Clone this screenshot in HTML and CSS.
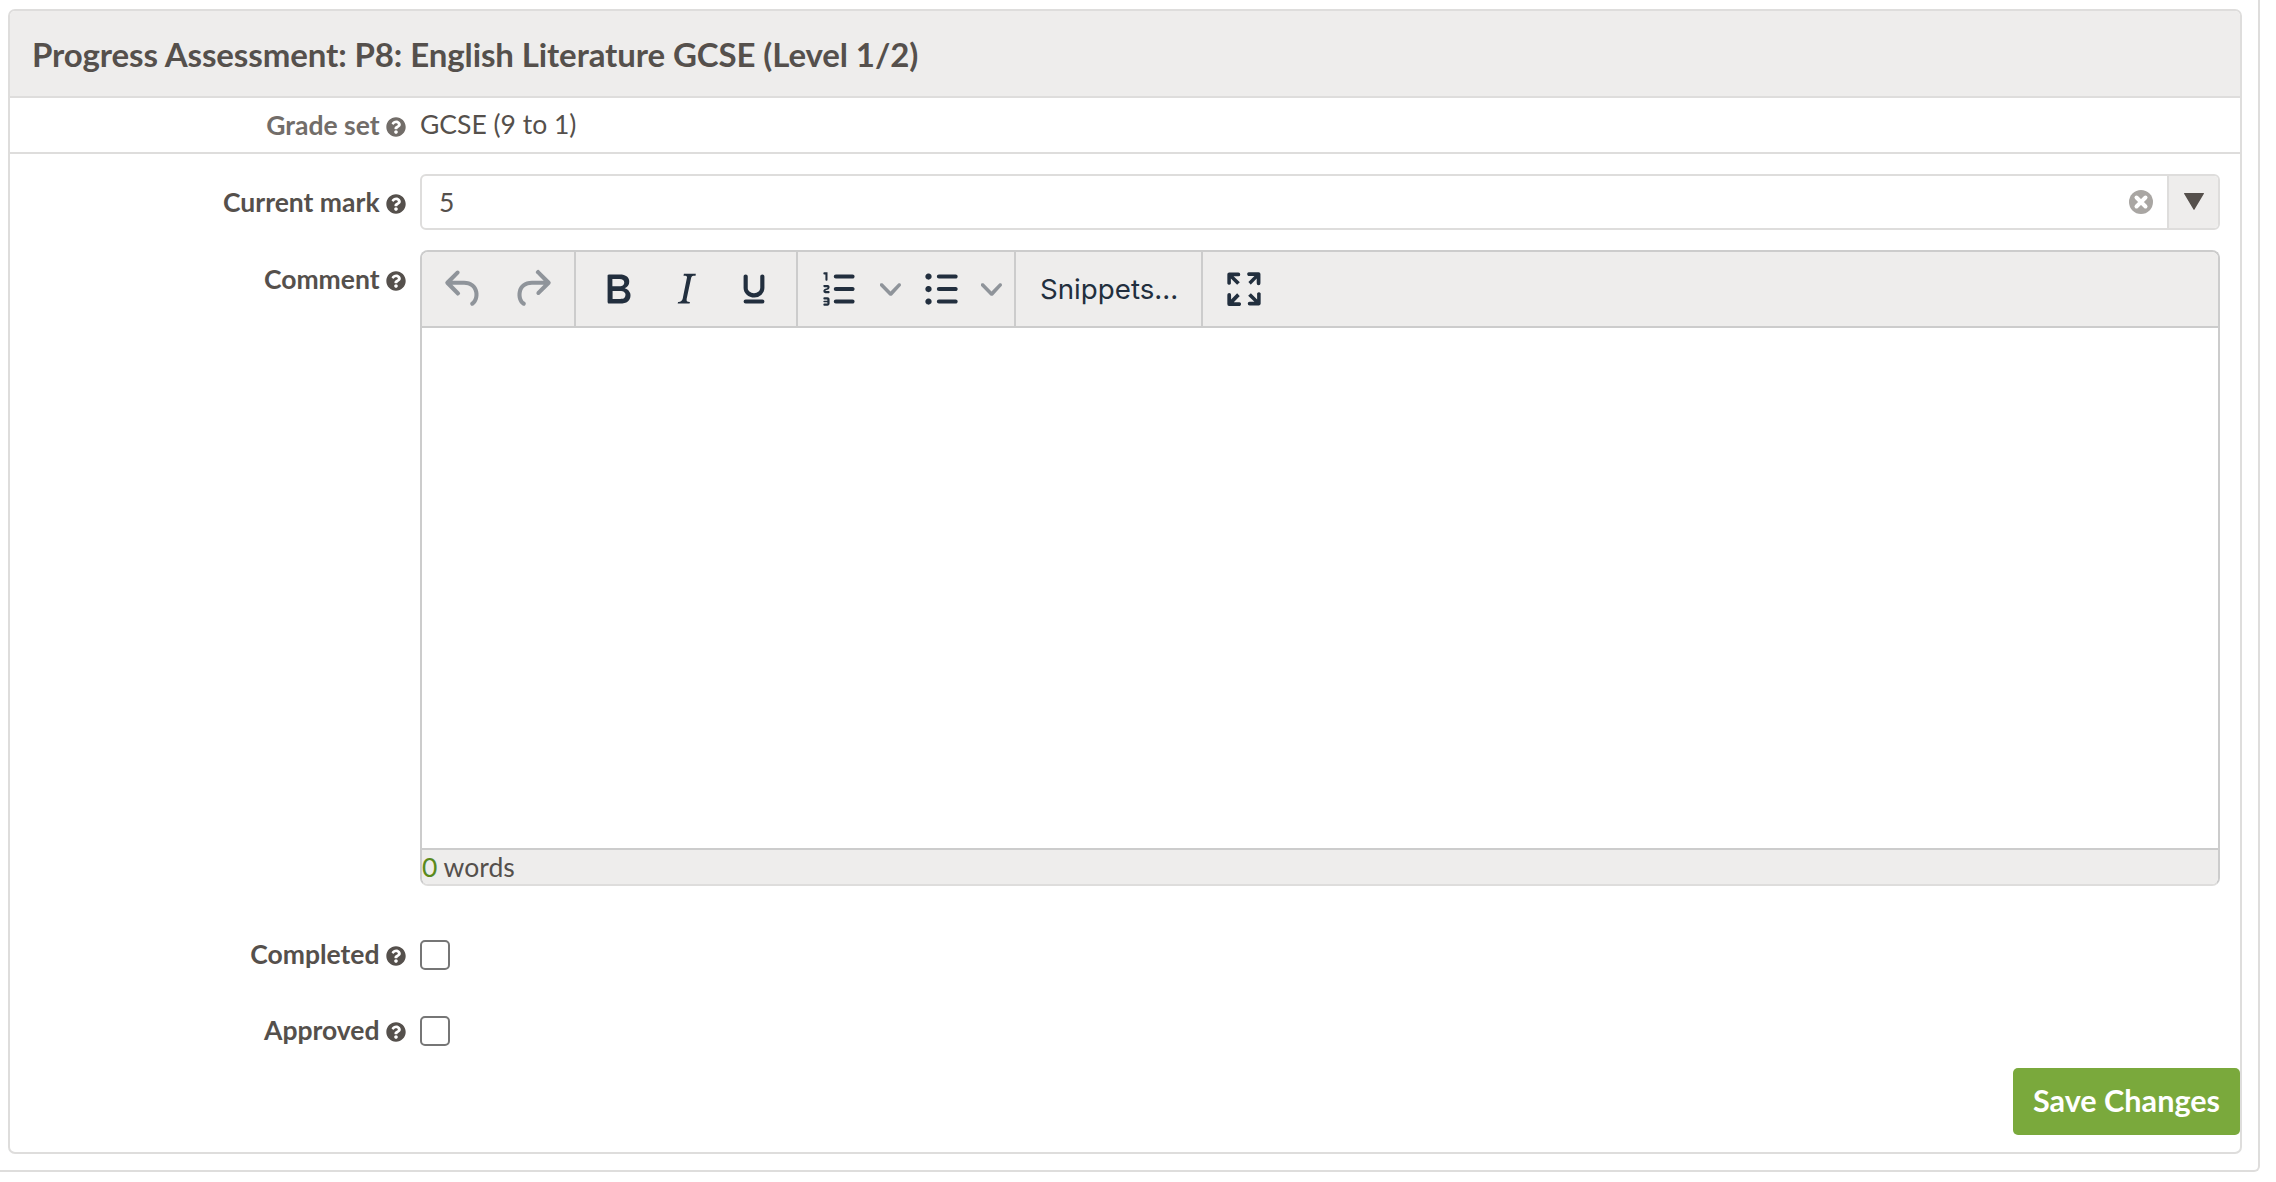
FILE: index.html
```html
<!DOCTYPE html>
<html lang="en">
<head>
<meta charset="utf-8">
<title>Progress Assessment</title>
<link rel="stylesheet" href="styles.css">
</head>
<body>
<div class="outer">
  <section class="panel">
    <h1 class="panel-title">Progress Assessment: P8: English Literature GCSE (Level 1/2)</h1>
    <div class="row row-static">
      <div class="label label-muted">Grade set <svg class="help" viewBox="0 0 512 512"><path d="M504 256c0 136.997-111.043 248-248 248S8 392.997 8 256C8 119.083 119.043 8 256 8s248 111.083 248 248zM262.655 90c-54.497 0-89.255 22.957-116.549 63.758-3.536 5.286-2.353 12.415 2.715 16.258l34.699 26.31c5.205 3.947 12.621 3.008 16.665-2.122 17.864-22.658 30.113-35.797 57.303-35.797 20.429 0 45.698 13.148 45.698 32.958 0 14.976-12.363 22.667-32.534 33.976C247.128 238.528 216 254.941 216 296v4c0 6.627 5.373 12 12 12h56c6.627 0 12-5.373 12-12v-1.333c0-28.462 83.186-29.647 83.186-106.667 0-58.002-60.165-102-116.531-102zM256 338c-25.365 0-46 20.635-46 46 0 25.364 20.635 46 46 46s46-20.636 46-46c0-25.365-20.635-46-46-46z"/></svg></div>
      <div class="static-value">GCSE (9 to 1)</div>
    </div>
    <div class="form-body">
      <div class="row row-select">
        <div class="label">Current mark <svg class="help" viewBox="0 0 512 512"><path d="M504 256c0 136.997-111.043 248-248 248S8 392.997 8 256C8 119.083 119.043 8 256 8s248 111.083 248 248zM262.655 90c-54.497 0-89.255 22.957-116.549 63.758-3.536 5.286-2.353 12.415 2.715 16.258l34.699 26.31c5.205 3.947 12.621 3.008 16.665-2.122 17.864-22.658 30.113-35.797 57.303-35.797 20.429 0 45.698 13.148 45.698 32.958 0 14.976-12.363 22.667-32.534 33.976C247.128 238.528 216 254.941 216 296v4c0 6.627 5.373 12 12 12h56c6.627 0 12-5.373 12-12v-1.333c0-28.462 83.186-29.647 83.186-106.667 0-58.002-60.165-102-116.531-102zM256 338c-25.365 0-46 20.635-46 46 0 25.364 20.635 46 46 46s46-20.636 46-46c0-25.365-20.635-46-46-46z"/></svg></div>
        <div class="select">
          <span class="select-value">5</span>
          <svg class="clear" viewBox="0 0 24 24"><circle cx="12" cy="12" r="12" fill="#a9a6a3"/><path d="M7.5 7.5l9 9M16.5 7.5l-9 9" stroke="#fff" stroke-width="4" stroke-linecap="round"/></svg>
          <span class="select-arrow"><svg class="arrow" viewBox="0 0 20 17"><path d="M0.5 0h19a.5.5 0 0 1 .4.8l-9.4 15.7a.6.6 0 0 1-1 0L.1.8A.5.5 0 0 1 .5 0z"/></svg></span>
        </div>
      </div>
      <div class="row row-editor">
        <div class="label label-editor">Comment <svg class="help" viewBox="0 0 512 512"><path d="M504 256c0 136.997-111.043 248-248 248S8 392.997 8 256C8 119.083 119.043 8 256 8s248 111.083 248 248zM262.655 90c-54.497 0-89.255 22.957-116.549 63.758-3.536 5.286-2.353 12.415 2.715 16.258l34.699 26.31c5.205 3.947 12.621 3.008 16.665-2.122 17.864-22.658 30.113-35.797 57.303-35.797 20.429 0 45.698 13.148 45.698 32.958 0 14.976-12.363 22.667-32.534 33.976C247.128 238.528 216 254.941 216 296v4c0 6.627 5.373 12 12 12h56c6.627 0 12-5.373 12-12v-1.333c0-28.462 83.186-29.647 83.186-106.667 0-58.002-60.165-102-116.531-102zM256 338c-25.365 0-46 20.635-46 46 0 25.364 20.635 46 46 46s46-20.636 46-46c0-25.365-20.635-46-46-46z"/></svg></div>
        <div class="editor">
          <div class="toolbar">
            <div class="tgroup tgroup-history">
              <span class="tbtn tbtn-disabled"><svg class="ticon" viewBox="0 0 24 24"><path d="M6.4 8H12c3.7 0 6.2 2 6.8 5.1.6 2.7-.4 5.6-2.3 6.8a1 1 0 0 1-1-1.8c1.1-.6 1.8-2.7 1.4-4.6-.5-2.1-2.1-3.5-4.9-3.5H6.4l3.3 3.3a1 1 0 1 1-1.4 1.4l-5-5a1 1 0 0 1 0-1.4l5-5a1 1 0 0 1 1.4 1.4L6.4 8Z"/></svg></span>
              <span class="tbtn tbtn-disabled"><svg class="ticon" viewBox="0 0 24 24"><path d="M17.6 10H12c-2.8 0-4.4 1.4-4.9 3.5-.4 2 .3 4 1.4 4.6a1 1 0 1 1-1 1.8c-2-1.2-2.9-4.1-2.3-6.8.6-3 3-5.1 6.8-5.1h5.6l-3.3-3.3a1 1 0 1 1 1.4-1.4l5 5a1 1 0 0 1 0 1.4l-5 5a1 1 0 0 1-1.4-1.4l3.3-3.3Z"/></svg></span>
            </div>
            <div class="tgroup tgroup-format">
              <span class="tbtn"><svg class="ticon" viewBox="0 0 24 24"><path d="M7.8 19c-.3 0-.5 0-.6-.2l-.2-.5V5.7c0-.2 0-.4.2-.5l.6-.2h5c1.5 0 2.7.3 3.5 1 .7.6 1.1 1.4 1.1 2.5a3 3 0 0 1-.6 1.9c-.4.6-1 1-1.6 1.2.4.1.9.3 1.3.6s.8.7 1 1.2c.4.4.5 1 .5 1.6 0 1.3-.4 2.3-1.3 3-.8.7-2.1 1-3.8 1H7.8Zm5-8.3c.6 0 1.2-.1 1.6-.5.4-.3.6-.7.6-1.3 0-1.1-.8-1.7-2.3-1.7H9.3v3.5h3.4Zm.5 6c.7 0 1.3-.1 1.7-.4.4-.4.6-.9.6-1.5s-.2-1-.7-1.4c-.4-.3-1-.4-2-.4H9.4v3.8h4Z"/></svg></span>
              <span class="tbtn"><svg class="ticon" viewBox="0 0 24 24"><path d="m16.7 4.7-.1.9h-.3c-.6 0-1 0-1.4.3-.3.3-.4.6-.5 1.1l-2.1 9.8v.6c0 .5.4.8 1.4.8h.2l-.2.8H8l.2-.8h.2c1.1 0 1.8-.5 2-1.5l2-9.8.1-.5c0-.6-.4-.8-1.4-.8h-.3l.2-.9h5.8Z"/></svg></span>
              <span class="tbtn"><svg class="ticon" viewBox="0 0 24 24"><path d="M16 5c.6 0 1 .4 1 1v5.5a4 4 0 0 1-.4 1.8l-1 1.4a5.3 5.3 0 0 1-5.5 1 5 5 0 0 1-1.6-1c-.5-.4-.8-.9-1.1-1.4a4 4 0 0 1-.4-1.8V6c0-.6.4-1 1-1s1 .4 1 1v5.5c0 .3 0 .6.2 1l.6.7a3.3 3.3 0 0 0 2.2.8 3.4 3.4 0 0 0 2.2-.8c.3-.2.4-.5.6-.8l.2-.9V6c0-.6.4-1 1-1ZM8 17h8c.6 0 1 .4 1 1s-.4 1-1 1H8a1 1 0 0 1 0-2Z"/></svg></span>
            </div>
            <div class="tgroup tgroup-lists">
              <span class="tbtn"><svg class="ticon" viewBox="0 0 24 24"><path d="M10 17h8c.6 0 1 .4 1 1s-.4 1-1 1h-8a1 1 0 0 1 0-2Zm0-6h8c.6 0 1 .4 1 1s-.4 1-1 1h-8a1 1 0 0 1 0-2Zm0-6h8c.6 0 1 .4 1 1s-.4 1-1 1h-8a1 1 0 1 1 0-2ZM6 4v3.5c0 .3-.2.5-.5.5a.5.5 0 0 1-.5-.5V5h-.5a.5.5 0 0 1 0-1H6Zm-1 8.8.2.2h1.3c.3 0 .5.2.5.5s-.2.5-.5.5H4.9a1 1 0 0 1-.9-1V13c0-.4.3-.8.6-1l1.2-.4.2-.3a.2.2 0 0 0-.2-.2H4.5a.5.5 0 0 1-.5-.5c0-.3.2-.5.5-.5h1.6c.5 0 .9.4.9 1v.1c0 .4-.3.8-.6 1l-1.2.4-.2.3ZM7 17v2c0 .6-.4 1-1 1H4.5a.5.5 0 0 1 0-1h1.2c.2 0 .3-.1.3-.3 0-.2-.1-.3-.3-.3H4.4a.4.4 0 1 1 0-.8h1.3c.2 0 .3-.1.3-.3 0-.2-.1-.3-.3-.3H4.5a.5.5 0 1 1 0-1H6c.6 0 1 .4 1 1Z"/></svg></span>
              <span class="tchev"><svg class="chev" viewBox="0 0 10 10"><path d="M8.7 2.2c.3-.3.8-.3 1 0 .4.4.4.9 0 1.2L5.7 7.8c-.3.3-.9.3-1.2 0L.2 3.4a.8.8 0 0 1 0-1.2c.3-.3.8-.3 1.1 0L5 6l3.7-3.8Z"/></svg></span>
              <span class="tbtn"><svg class="ticon" viewBox="0 0 24 24"><path d="M11 5h8c.6 0 1 .4 1 1s-.4 1-1 1h-8a1 1 0 0 1 0-2Zm0 6h8c.6 0 1 .4 1 1s-.4 1-1 1h-8a1 1 0 0 1 0-2Zm0 6h8c.6 0 1 .4 1 1s-.4 1-1 1h-8a1 1 0 0 1 0-2ZM4.5 6c0-.4.1-.8.4-1 .3-.4.7-.5 1.1-.5s.8.1 1 .4c.4.3.5.7.5 1.1s-.1.8-.4 1c-.3.4-.7.5-1.1.5s-.8-.1-1-.4c-.4-.3-.5-.7-.5-1.1Zm0 6c0-.4.1-.8.4-1 .3-.4.7-.5 1.1-.5s.8.1 1 .4c.4.3.5.7.5 1.1s-.1.8-.4 1c-.3.4-.7.5-1.1.5s-.8-.1-1-.4c-.4-.3-.5-.7-.5-1.1Zm0 6c0-.4.1-.8.4-1 .3-.4.7-.5 1.1-.5s.8.1 1 .4c.4.3.5.7.5 1.1s-.1.8-.4 1c-.3.4-.7.5-1.1.5s-.8-.1-1-.4c-.4-.3-.5-.7-.5-1.1Z"/></svg></span>
              <span class="tchev"><svg class="chev" viewBox="0 0 10 10"><path d="M8.7 2.2c.3-.3.8-.3 1 0 .4.4.4.9 0 1.2L5.7 7.8c-.3.3-.9.3-1.2 0L.2 3.4a.8.8 0 0 1 0-1.2c.3-.3.8-.3 1.1 0L5 6l3.7-3.8Z"/></svg></span>
            </div>
            <div class="tgroup tgroup-snippets"><span class="snippets">Snippets...</span></div>
            <div class="tgroup tgroup-full">
              <span class="tbtn"><svg class="ticon" viewBox="0 0 24 24"><path d="m15.3 10-1.2-1.3 2.9-3h-2.3a.9.9 0 1 1 0-1.7H19c.5 0 .9.4.9.9v4.4a.9.9 0 1 1-1.8 0V7l-2.9 3Zm0 4 3 3v-2.3a.9.9 0 1 1 1.7 0V19c0 .5-.4.9-.9.9h-4.4a.9.9 0 1 1 0-1.8H17l-3-2.9 1.3-1.2ZM10 15.4l-2.9 3h2.3a.9.9 0 1 1 0 1.7H5a.9.9 0 0 1-1-.9v-4.4a.9.9 0 1 1 1.8 0V17l2.9-3 1.2 1.3ZM8.7 10 5.7 7v2.3a.9.9 0 0 1-1.7 0V5c0-.5.4-.9.9-.9h4.4a.9.9 0 0 1 0 1.8H7l3 2.9-1.3 1.2Z"/></svg></span>
            </div>
          </div>
          <div class="edit-area"></div>
          <div class="statusbar"><span class="count">0</span> words</div>
        </div>
      </div>
      <div class="row row-check row-completed">
        <div class="label">Completed <svg class="help" viewBox="0 0 512 512"><path d="M504 256c0 136.997-111.043 248-248 248S8 392.997 8 256C8 119.083 119.043 8 256 8s248 111.083 248 248zM262.655 90c-54.497 0-89.255 22.957-116.549 63.758-3.536 5.286-2.353 12.415 2.715 16.258l34.699 26.31c5.205 3.947 12.621 3.008 16.665-2.122 17.864-22.658 30.113-35.797 57.303-35.797 20.429 0 45.698 13.148 45.698 32.958 0 14.976-12.363 22.667-32.534 33.976C247.128 238.528 216 254.941 216 296v4c0 6.627 5.373 12 12 12h56c6.627 0 12-5.373 12-12v-1.333c0-28.462 83.186-29.647 83.186-106.667 0-58.002-60.165-102-116.531-102zM256 338c-25.365 0-46 20.635-46 46 0 25.364 20.635 46 46 46s46-20.636 46-46c0-25.365-20.635-46-46-46z"/></svg></div>
        <span class="checkbox"></span>
      </div>
      <div class="row row-check row-approved">
        <div class="label">Approved <svg class="help" viewBox="0 0 512 512"><path d="M504 256c0 136.997-111.043 248-248 248S8 392.997 8 256C8 119.083 119.043 8 256 8s248 111.083 248 248zM262.655 90c-54.497 0-89.255 22.957-116.549 63.758-3.536 5.286-2.353 12.415 2.715 16.258l34.699 26.31c5.205 3.947 12.621 3.008 16.665-2.122 17.864-22.658 30.113-35.797 57.303-35.797 20.429 0 45.698 13.148 45.698 32.958 0 14.976-12.363 22.667-32.534 33.976C247.128 238.528 216 254.941 216 296v4c0 6.627 5.373 12 12 12h56c6.627 0 12-5.373 12-12v-1.333c0-28.462 83.186-29.647 83.186-106.667 0-58.002-60.165-102-116.531-102zM256 338c-25.365 0-46 20.635-46 46 0 25.364 20.635 46 46 46s46-20.636 46-46c0-25.365-20.635-46-46-46z"/></svg></div>
        <span class="checkbox"></span>
      </div>
      <div class="actions"><button class="save" type="button">Save Changes</button></div>
    </div>
  </section>
</div>
</body>
</html>
```
FILE: styles.css
```css
* { box-sizing: border-box; }
html, body { margin: 0; background: #fff; }
body { font-family: "Lato", "Open Sans", sans-serif; color: #55504c; }
.outer {
  width: 2260px;
  height: 1172px;
  padding: 9px 0 0 8px;
  border-right: 2px solid #dedddc;
  border-bottom: 2px solid #dedddc;
  border-bottom-right-radius: 6px;
}
.panel {
  width: 2234px;
  height: 1145px;
  border: 2px solid #dedddc;
  border-radius: 7px;
  overflow: hidden;
}
.panel-title {
  margin: 0;
  height: 87px;
  padding: 0 0 0 22px;
  display: flex;
  align-items: center;
  background: #eeedec;
  border-bottom: 2px solid #dedddc;
  font-size: 33px;
  letter-spacing: -0.1px;
  font-weight: 700;
  color: #55504c;
}
.row {
  display: grid;
  grid-template-columns: 396px 1800px;
  column-gap: 14px;
}
.label {
  display: flex;
  align-items: center;
  justify-content: flex-end;
  font-size: 26.5px;
  font-weight: 700;
  white-space: pre;
}
.label-muted { color: #726d69; }
.help { width: 20px; height: 20px; fill: currentColor; flex: none; margin-top: 3px; }
.row-static {
  height: 56px;
  border-bottom: 2px solid #dedddc;
  align-items: center;
}
.static-value { font-size: 26.5px; margin-top: -2px; }
.form-body { padding-top: 20px; }
.row-select { align-items: center; }
.select {
  height: 56px;
  display: flex;
  align-items: center;
  border: 2px solid #dedddc;
  border-radius: 6px;
  overflow: hidden;
  padding-left: 17px;
}
.select-value { flex: 1; font-size: 26.5px; }
.clear { width: 24px; height: 24px; margin-right: 14px; }
.select-arrow {
  width: 51px;
  height: 100%;
  display: flex;
  align-items: center;
  justify-content: center;
  background: #eeedec;
  border-left: 2px solid #dedddc;
}
.arrow { width: 20px; height: 17px; fill: #55504c; margin-top: -2px; }
.row-editor { margin-top: 20px; }
.label-editor { align-self: start; height: 56px; margin-top: 1px; }
.editor {
  height: 636px;
  display: flex;
  flex-direction: column;
  border: 2px solid #cccccc;
  border-bottom-color: #dedddc;
  border-radius: 8px;
  overflow: hidden;
}
.toolbar {
  height: 76px;
  flex: none;
  display: flex;
  background: #eeedec;
  border-bottom: 2px solid #cccccc;
}
.tgroup { display: flex; align-items: center; border-right: 2px solid #cccccc; }
.tgroup-history { width: 154px; padding-left: 8px; }
.tgroup-format { width: 222px; padding-left: 8px; }
.tgroup-lists { width: 218px; padding-left: 8px; }
.tgroup-snippets { width: 187px; padding-left: 24px; }
.tgroup-full { border-right: 0; padding-left: 7px; }
.tbtn { width: 68px; height: 68px; flex: none; display: flex; align-items: center; justify-content: center; }
.ticon { width: 50px; height: 50px; fill: #222f3e; }
.tbtn-disabled .ticon { fill: #8f949a; }
.tchev { width: 33px; flex: none; display: flex; justify-content: center; }
.chev { width: 21px; height: 21px; fill: #8f949a; }
.snippets { font-family: "Inter", sans-serif; font-size: 27.7px; color: #222f3e; white-space: nowrap; }
.edit-area { flex: 1; background: #fff; }
.statusbar {
  height: 36px;
  flex: none;
  background: #eeedec;
  border-top: 2px solid #cccccc;
  font-size: 26.5px;
  line-height: 35px;
  white-space: pre;
}
.count { color: #5b8a1c; }
.row-check { align-items: center; height: 30px; }
.row-check .label { margin-top: -2px; }
.row-completed { margin-top: 54px; }
.row-approved { margin-top: 46px; }
.checkbox {
  display: block;
  width: 30px;
  height: 30px;
  border: 2px solid #767676;
  border-radius: 5px;
  background: #fff;
}
.actions { display: flex; justify-content: flex-end; margin-top: 22px; }
.save {
  width: 227px;
  height: 67px;
  border: 0;
  border-radius: 5px;
  background: #7aa93c;
  color: #fff;
  font-family: "Lato", sans-serif;
  font-size: 30.6px;
  font-weight: 700;
  padding: 0 0 3px;
}
```
